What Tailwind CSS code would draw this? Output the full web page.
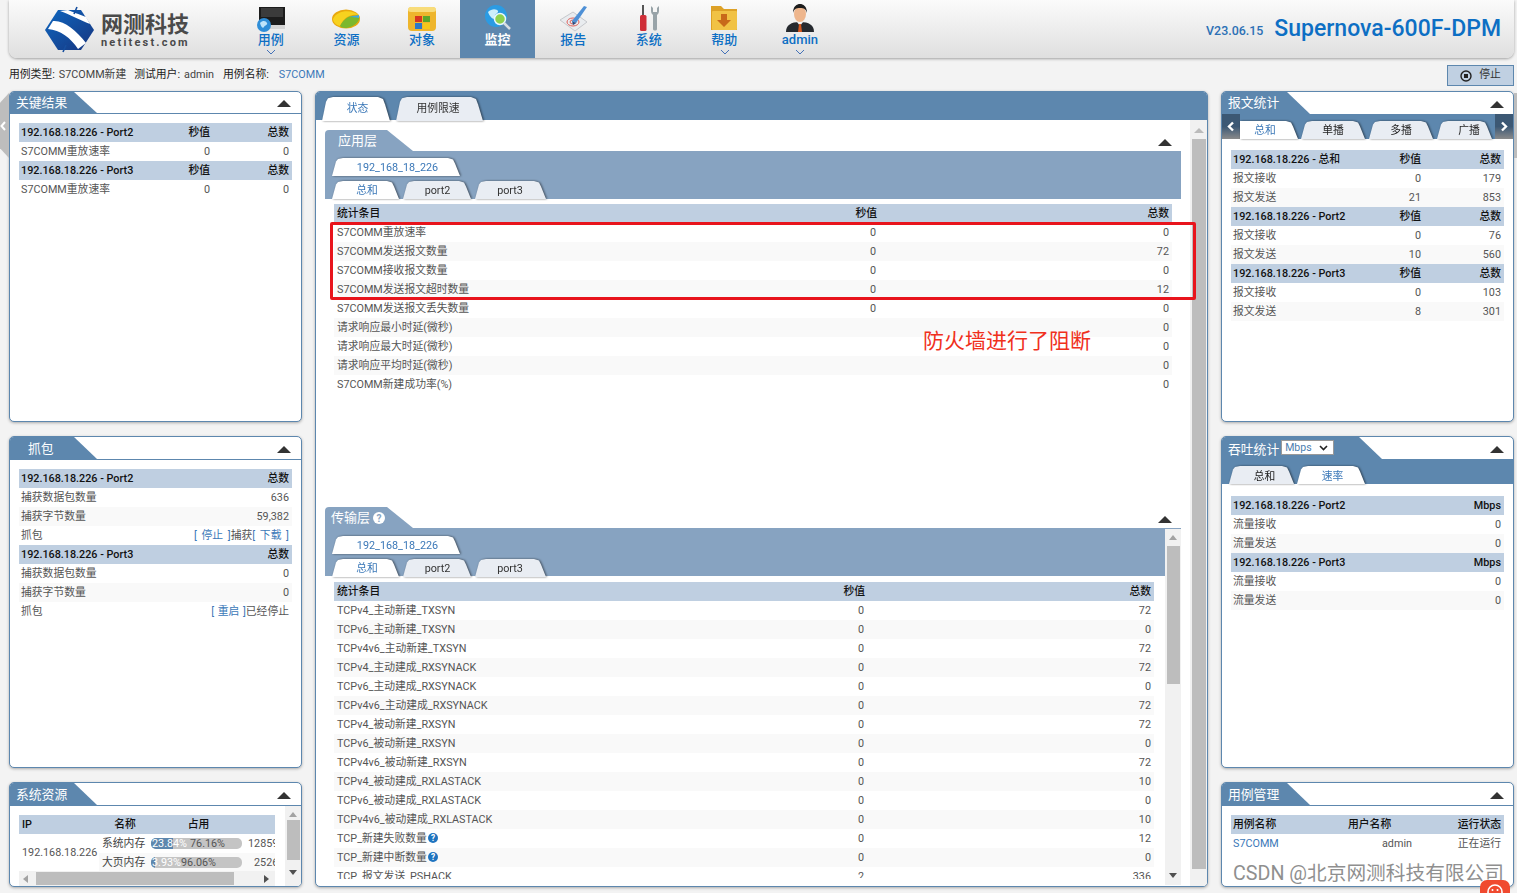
<!DOCTYPE html>
<html lang="zh-CN">
<head>
    <meta charset="UTF-8">
    <title>Supernova-600F-DPM</title>
    <script src="https://cdn.jsdelivr.net/npm/@tailwindcss/browser@4"></script>
</head>
<body class="bg-[#f3f3f3]">
<div class="relative w-[1517px] h-[893px] overflow-hidden pl-[9px] text-[10.8px] text-[#555] font-['Roboto','Noto_Sans_CJK_SC',sans-serif]">

    <!-- side handles -->
    <div class="absolute left-0 top-[93px] w-[9px] h-[65px] bg-[#bdbdbd] [clip-path:polygon(0_15%,100%_0,100%_100%,0_85%)]"></div>
    <svg class="absolute left-0 top-[121px]" width="7" height="10" viewBox="0 0 7 10"><path d="M5 1L1.5 5L5 9" fill="none" stroke="#fff" stroke-width="2"/></svg>
    <div class="absolute right-0 top-[93px] w-[3px] h-[65px] bg-[#bdbdbd]"></div>

    <!-- Header -->
    <header class="flex items-stretch w-[1505px] h-[58px] rounded-b-lg bg-gradient-to-b from-[#fbfbfb] to-[#dfdfdf] shadow-[0_1px_3px_rgba(0,0,0,.35)]">
        <div class="flex w-[224px] pl-[35px] pt-[6px]">
            <svg width="52" height="47" viewBox="0 0 52 47">
                <defs><linearGradient id="lg" x1="0" y1="0" x2="1" y2="1"><stop offset="0" stop-color="#0f67c0"/><stop offset="1" stop-color="#17357f"/></linearGradient></defs>
                <path d="M1 24L14 4H37L50 24L37 44H14Z" fill="url(#lg)"/>
                <path d="M9 15C20 14 32 24 42 37L34 43C27 32 16 24 4 23ZM16 5C25 8 36 14 46 18L42 11C35 8 28 6 24 4Z" fill="#fff"/>
                <path d="M33 1L30 8M19 46L22 39" stroke="#174f9f" stroke-width="1.6"/>
            </svg>
            <div class="ml-[5px] pt-[7px] text-[#4a4a4a]">
                <div class="text-[22px] leading-[24px] font-bold">网测科技</div>
                <div class="text-[11px] leading-[12px] font-bold tracking-[2.2px] whitespace-nowrap">netitest.com</div>
            </div>
        </div>
        <nav class="flex text-[#0d6fc4] text-[13px] font-medium leading-[16px] text-center">
            <a class="relative block w-[75.6px] pt-[6px]">
                <svg class="mx-auto" width="30" height="26" viewBox="0 0 30 26">
                    <rect x="3" y="1" width="26" height="18" fill="#1c1c1c"/><rect x="5" y="2" width="22" height="9" fill="#3b3b3b"/><rect x="6" y="19" width="23" height="4" fill="#d5d5d5"/>
                    <circle cx="8" cy="19" r="7" fill="#2f8ed8"/><path d="M4 17c3-3 6-2 7 0s-2 2-3 4-3 0-4-4z" fill="#bfe4fa"/>
                </svg>
                <span class="block">用例</span>
                <svg class="absolute left-[33px] top-[49px]" width="10" height="6" viewBox="0 0 10 6"><path d="M1 1L5 5L9 1" fill="none" stroke="#4472b8" stroke-width="1"/></svg>
            </a>
            <a class="block w-[75.6px] pt-[6px]">
                <svg class="mx-auto" width="30" height="26" viewBox="0 0 30 26">
                    <ellipse cx="15" cy="13" rx="14" ry="9.5" fill="#e9a90e"/><path d="M2 13C6 4 20 3 28 9C22 8 14 9 9 20C5 19 2 16 2 13Z" fill="#f7d21f"/><path d="M9 20C14 10 21 9 28 10C30 15 22 22 14 22C12 22 10 21 9 20Z" fill="#7cb82c"/><path d="M18 11L28 9L28 12C24 11 21 11 18 11Z" fill="#41a8e0"/>
                </svg>
                <span class="block">资源</span>
            </a>
            <a class="block w-[75.6px] pt-[6px]">
                <svg class="mx-auto" width="30" height="26" viewBox="0 0 30 26">
                    <rect x="1" y="1" width="28" height="24" rx="4" fill="#eeb52c"/><rect x="1" y="1" width="28" height="5" rx="3" fill="#f8dc7a"/>
                    <rect x="8" y="10" width="7" height="6" fill="#d8351f"/><rect x="16" y="10" width="7" height="6" fill="#5aa62a"/><rect x="8" y="17" width="7" height="6" fill="#2d78c6"/><rect x="16" y="17" width="7" height="6" fill="#f5c71a"/>
                </svg>
                <span class="block">对象</span>
            </a>
            <a class="block w-[75.6px] pt-[4px] bg-[#5d87ae] text-white font-bold">
                <svg class="mx-auto" width="30" height="28" viewBox="0 0 30 28">
                    <circle cx="13" cy="12" r="11" fill="#2b9be3"/><path d="M5 8c4-4 9-3 10-1s-4 3-3 6-4 3-7-5z" fill="#cdeefc"/><circle cx="17" cy="15" r="5.5" fill="#8ed14f" stroke="#e8f6ff" stroke-width="1.5"/><path d="M21 19L27 25" stroke="#d8dde2" stroke-width="2.5"/>
                </svg>
                <span class="block">监控</span>
            </a>
            <a class="block w-[75.6px] pt-[4px]">
                <svg class="mx-auto" width="30" height="28" viewBox="0 0 30 28">
                    <path d="M2 16L15 8L29 18L17 27Z" fill="#e9ecef" stroke="#c6c8cc"/><ellipse cx="15" cy="18" rx="6" ry="4" fill="none" stroke="#e0605a"/><ellipse cx="15" cy="18" rx="3" ry="2" fill="none" stroke="#e0605a"/>
                    <path d="M14 17L26 2L29 3L18 19Z" fill="#4e90d6"/><path d="M14 17L15 21L18 19Z" fill="#234f86"/>
                </svg>
                <span class="block">报告</span>
            </a>
            <a class="block w-[75.6px] pt-[4px]">
                <svg class="mx-auto" width="30" height="28" viewBox="0 0 30 28">
                    <rect x="8" y="1" width="2" height="10" fill="#555"/><rect x="6" y="11" width="6.5" height="16" rx="1.5" fill="#cf2e38"/>
                    <path d="M17 2v5c0 2 1 3 2 4v14c0 2 4 2 4 0V11c1-1 2-2 2-4V2l-2 2v4h-4V4z" fill="#98a3a8"/>
                </svg>
                <span class="block">系统</span>
            </a>
            <a class="relative block w-[75.6px] pt-[4px]">
                <svg class="mx-auto" width="30" height="28" viewBox="0 0 30 28">
                    <path d="M2 2h10l3 3h13v21H2z" fill="#dda127"/><rect x="3" y="7" width="25" height="19" rx="1" fill="#f1c245"/>
                    <path d="M12 10h6v6h4l-7 7-7-7h4z" fill="#c8691a"/>
                </svg>
                <span class="block">帮助</span>
                <svg class="absolute left-[33px] top-[49px]" width="10" height="6" viewBox="0 0 10 6"><path d="M1 1L5 5L9 1" fill="none" stroke="#4472b8" stroke-width="1"/></svg>
            </a>
            <a class="relative block w-[75.6px] pt-[4px]">
                <svg class="mx-auto" width="30" height="28" viewBox="0 0 30 28">
                    <path d="M1 28c0-7 5-10 14-10s14 3 14 10z" fill="#25292e"/><path d="M12 18h6l-3 4z" fill="#f2f2f2"/><path d="M14 20h2l1 8h-4z" fill="#d4581f"/>
                    <ellipse cx="15" cy="10" rx="6" ry="8" fill="#eeb68d"/><path d="M8 9C8 2 12 0 15 0s7 2 7 9c-1-4-3-5-7-5s-6 1-7 5z" fill="#1d1d1d"/>
                </svg>
                <span class="block">admin</span>
                <svg class="absolute left-[33px] top-[49px]" width="10" height="6" viewBox="0 0 10 6"><path d="M1 1L5 5L9 1" fill="none" stroke="#4472b8" stroke-width="1"/></svg>
            </a>
        </nav>
        <div class="ml-auto flex items-center pr-[13px] pb-[1px] text-[#0d6fc4] font-medium">
            <span class="text-[12.4px] text-[#2c70b5] mt-[6px] mr-[11px]">V23.06.15</span>
            <span class="text-[23px] leading-[30px]">Supernova-600F-DPM</span>
        </div>
    </header>

    <!-- Info row -->
    <div class="flex items-center w-[1505px] h-[33px] pt-[2px] text-[#444]">
        <span class="text-[#222]">用例类型:</span><span class="ml-[4px]">S7COMM新建</span>
        <span class="ml-[8px] text-[#222]">测试用户:</span><span class="ml-[4px]">admin</span>
        <span class="ml-[9px] text-[#222]">用例名称:</span><span class="ml-[10px] text-[#3b78b8]">S7COMM</span>
        <button class="ml-auto flex items-center justify-center gap-[7px] w-[67px] h-[21px] bg-[#c0d0e2] border border-[#5d87ae] text-[#333]">
            <svg width="12" height="12" viewBox="0 0 12 12"><circle cx="6" cy="6" r="5" fill="none" stroke="#222" stroke-width="1.4"/><rect x="4" y="4" width="4" height="4" fill="#222"/></svg>
            <span>停止</span>
        </button>
    </div>

    <!-- Columns -->
    <div class="flex gap-[13px] w-[1505px] h-[796px]">

        <!-- Left column -->
        <div class="flex flex-col gap-[14px] w-[293px]">
            <section class="h-[331px] bg-white border border-[#5d87ae] rounded-[5px] shadow-[0_1px_3px_rgba(0,0,0,.3)] overflow-hidden">
                <div class="flex justify-between h-[22px] border-b border-[#5d87ae]">
                    <div class="w-[87px] pl-[6px] bg-[#5d87ae] text-white text-[12.8px] leading-[22px] [clip-path:polygon(0_0,calc(100%_-_23px)_0,100%_100%,0_100%)]">关键结果</div>
                    <div class="w-0 h-0 mt-[8px] mr-[10px] border-x-[7px] border-x-transparent border-b-[7px] border-b-[#333]"></div>
                </div>
                <table class="ml-[9px] mt-[9px] w-[273px] table-fixed border-collapse [&_td]:h-[19px] [&_td]:p-0 [&_td]:pl-[2px] [&_td]:pr-[3px] [&_td]:pt-px">
                    <colgroup><col class="w-[132px]"><col class="w-[62px]"><col></colgroup>
                    <tr class="bg-[#bfcfe1] text-[#111] font-medium"><td>192.168.18.226 - Port2</td><td class="text-right">秒值</td><td class="text-right">总数</td></tr>
                    <tr><td>S7COMM重放速率</td><td class="text-right">0</td><td class="text-right">0</td></tr>
                    <tr class="bg-[#bfcfe1] text-[#111] font-medium"><td>192.168.18.226 - Port3</td><td class="text-right">秒值</td><td class="text-right">总数</td></tr>
                    <tr><td>S7COMM重放速率</td><td class="text-right">0</td><td class="text-right">0</td></tr>
                </table>
            </section>

            <section class="h-[332px] bg-white border border-[#5d87ae] rounded-[5px] shadow-[0_1px_3px_rgba(0,0,0,.3)] overflow-hidden">
                <div class="flex justify-between h-[23px] border-b border-[#5d87ae]">
                    <div class="w-[87px] pl-[18px] bg-[#5d87ae] text-white text-[12.8px] leading-[23px] [clip-path:polygon(0_0,calc(100%_-_23px)_0,100%_100%,0_100%)]">抓包</div>
                    <div class="w-0 h-0 mt-[9px] mr-[10px] border-x-[7px] border-x-transparent border-b-[7px] border-b-[#333]"></div>
                </div>
                <table class="ml-[9px] mt-[9px] w-[273px] table-fixed border-collapse [&_td]:h-[19px] [&_td]:p-0 [&_td]:pl-[2px] [&_td]:pr-[3px] [&_td]:pt-px">
                    <colgroup><col class="w-[150px]"><col></colgroup>
                    <tr class="bg-[#bfcfe1] text-[#111] font-medium"><td>192.168.18.226 - Port2</td><td class="text-right">总数</td></tr>
                    <tr><td>捕获数据包数量</td><td class="text-right">636</td></tr>
                    <tr class="bg-[#f9f9f9]"><td>捕获字节数量</td><td class="text-right">59,382</td></tr>
                    <tr><td>抓包</td><td class="text-right"><span class="text-[#3b78b8] [word-spacing:2px]">[ 停止 ]</span>捕获<span class="text-[#3b78b8] [word-spacing:2px]">[ 下载 ]</span></td></tr>
                    <tr class="bg-[#bfcfe1] text-[#111] font-medium"><td>192.168.18.226 - Port3</td><td class="text-right">总数</td></tr>
                    <tr><td>捕获数据包数量</td><td class="text-right">0</td></tr>
                    <tr class="bg-[#f9f9f9]"><td>捕获字节数量</td><td class="text-right">0</td></tr>
                    <tr><td>抓包</td><td class="text-right"><span class="text-[#3b78b8] [word-spacing:1px]">[ 重启 ]</span>已经停止</td></tr>
                </table>
            </section>

            <section class="h-[105px] bg-white border border-[#5d87ae] rounded-[5px] shadow-[0_1px_3px_rgba(0,0,0,.3)] overflow-hidden">
                <div class="flex justify-between h-[23px] border-b border-[#5d87ae]">
                    <div class="w-[87px] pl-[6px] bg-[#5d87ae] text-white text-[12.8px] leading-[23px] [clip-path:polygon(0_0,calc(100%_-_23px)_0,100%_100%,0_100%)]">系统资源</div>
                    <div class="w-0 h-0 mt-[9px] mr-[10px] border-x-[7px] border-x-transparent border-b-[7px] border-b-[#333]"></div>
                </div>
                <div class="flex h-[80px]">
                    <div class="w-[266px] pl-[9px] pt-[9px]">
                        <div class="w-[256px] h-[56px] overflow-hidden">
                            <table class="w-[290px] table-fixed border-collapse whitespace-nowrap [&_td]:h-[19px] [&_td]:p-0 [&_td]:px-[3px] [&_td]:pt-px">
                                <colgroup><col class="w-[80px]"><col class="w-[52px]"><col class="w-[95px]"><col></colgroup>
                                <tr class="bg-[#bfcfe1] text-[#111] font-medium"><td>IP</td><td class="text-center">名称</td><td class="text-center">占用</td><td></td></tr>
                                <tr><td rowspan="2">192.168.18.226</td><td class="text-[#444]">系统内存</td>
                                    <td class="p-0!"><div class="relative w-[91px] h-[11px] rounded-[5px] bg-[#c4c4c4] overflow-hidden leading-[11px]"><div class="h-full bg-[#5d87ae] w-[24%]"></div><span class="absolute left-[1px] top-0 text-white">23.84%</span><span class="absolute left-[39px] top-0 text-[#555]">76.16%</span></div></td>
                                    <td class="pl-[2px]!">12859</td></tr>
                                <tr class="bg-[#f9f9f9]"><td class="text-[#444]">大页内存</td>
                                    <td class="p-0!"><div class="relative w-[91px] h-[11px] rounded-[5px] bg-[#c4c4c4] overflow-hidden leading-[11px]"><div class="h-full bg-[#5d87ae] w-[4%]"></div><span class="absolute left-[1px] top-0 text-white">3.93%</span><span class="absolute left-[30px] top-0 text-[#555]">96.06%</span></div></td>
                                    <td class="pl-[8px]!">2526</td></tr>
                            </table>
                        </div>
                        <div class="flex items-center w-[256px] h-[15px] bg-[#f1f1f1]">
                            <div class="w-0 h-0 ml-[4px] border-y-[4px] border-y-transparent border-r-[5px] border-r-[#a3a3a3]"></div>
                            <div class="ml-[8px] w-[198px] h-[13px] bg-[#bdbdbd]"></div>
                            <div class="w-0 h-0 ml-[30px] border-y-[4px] border-y-transparent border-l-[5px] border-l-[#505050]"></div>
                        </div>
                    </div>
                    <div class="flex flex-col items-center w-[16px] ml-[9px] bg-[#f1f1f1] pt-[6px]">
                        <div class="w-0 h-0 border-x-[4px] border-x-transparent border-b-[5px] border-b-[#a3a3a3]"></div>
                        <div class="w-[13px] h-[40px] mt-[3px] bg-[#bdbdbd]"></div>
                        <div class="w-0 h-0 mt-[10px] border-x-[4px] border-x-transparent border-t-[5px] border-t-[#505050]"></div>
                    </div>
                </div>
            </section>
        </div>

        <!-- Center column -->
        <main class="relative w-[893px] h-[796px] bg-white border border-[#5d87ae] rounded-[5px] shadow-[0_1px_3px_rgba(0,0,0,.3)] overflow-hidden">
            <div class="h-[28px] pl-[6px] pt-[5px] bg-[#5d87ae]">
                <div class="flex gap-[3px] drop-shadow-[1px_0_1px_rgba(0,0,0,.55)] [&>a]:h-[24px] [&>a]:leading-[24px] [&>a]:text-center [&>a]:[clip-path:polygon(0_100%,2px_60%,4px_20%,6px_5%,11px_0,calc(100%_-_15px)_0,calc(100%_-_10px)_8%,calc(100%_-_8px)_30%,calc(100%_-_3px)_100%)]">
                    <a class="w-[71px] bg-white text-[#3b78b8]">状态</a>
                    <a class="w-[90px] pr-[6px] bg-[#e9edf3] text-[#333]">用例限速</a>
                </div>
            </div>
            <div class="flex h-[767px]">
                <div class="w-[866px] pl-[9px]">

                    <!-- Application layer -->
                    <div class="h-[387px] pt-[10px]">
                        <div class="flex justify-between h-[21px]">
                            <div class="w-[88px] pl-[13px] bg-[#87a3c1] text-white text-[13px] leading-[22px] rounded-tl-[4px] [clip-path:polygon(0_0,calc(100%_-_26px)_0,100%_100%,0_100%)]">应用层</div>
                            <div class="w-0 h-0 mt-[9px] mr-[9px] border-x-[7px] border-x-transparent border-b-[7px] border-b-[#333]"></div>
                        </div>
                        <div class="w-[856px] h-[48px] bg-[#87a3c1] pl-[7px] pt-[7px]">
                            <div class="flex drop-shadow-[1px_0_1px_rgba(0,0,0,.55)] [&>a]:h-[18px] [&>a]:leading-[19px] [&>a]:text-center [&>a]:[clip-path:polygon(0_100%,2px_60%,4px_20%,6px_5%,11px_0,calc(100%_-_15px)_0,calc(100%_-_10px)_8%,calc(100%_-_8px)_30%,calc(100%_-_3px)_100%)]">
                                <a class="w-[131px] bg-white text-[#3b78b8]">192_168_18_226</a>
                            </div>
                            <div class="flex mt-[5px] drop-shadow-[1px_0_1px_rgba(0,0,0,.55)] [&>a]:h-[18px] [&>a]:leading-[20px] [&>a]:text-center [&>a]:[clip-path:polygon(0_100%,2px_60%,4px_20%,6px_5%,11px_0,calc(100%_-_15px)_0,calc(100%_-_10px)_8%,calc(100%_-_8px)_30%,calc(100%_-_3px)_100%)]">
                                <a class="w-[70px] bg-white text-[#3b78b8]">总和</a>
                                <a class="w-[71px] ml-[1px] pr-[2px] bg-[#e9edf3] text-[#333]">port2</a>
                                <a class="w-[74px] ml-[1px] pr-[4px] bg-[#e9edf3] text-[#333]">port3</a>
                            </div>
                        </div>
                        <table class="ml-[9px] mt-[5px] w-[838px] table-fixed border-collapse [&_td]:h-[19px] [&_td]:p-0 [&_td]:px-[3px] [&_td]:pt-px [&_tr:nth-child(odd)]:bg-[#f9f9f9]">
                            <colgroup><col class="w-[545px]"><col class="w-[0px]"><col></colgroup>
                            <tr class="bg-[#bfcfe1]! text-[#111] font-medium"><td>统计条目</td><td class="text-right"></td><td class="text-right">总数</td></tr>
                            <tr class="bg-white!"><td>S7COMM重放速率</td><td></td><td class="text-right">0</td></tr>
                            <tr><td>S7COMM发送报文数量</td><td></td><td class="text-right">72</td></tr>
                            <tr class="bg-white!"><td>S7COMM接收报文数量</td><td></td><td class="text-right">0</td></tr>
                            <tr><td>S7COMM发送报文超时数量</td><td></td><td class="text-right">12</td></tr>
                            <tr class="bg-white!"><td>S7COMM发送报文丢失数量</td><td></td><td class="text-right">0</td></tr>
                            <tr><td>请求响应最小时延(微秒)</td><td></td><td class="text-right">0</td></tr>
                            <tr class="bg-white!"><td>请求响应最大时延(微秒)</td><td></td><td class="text-right">0</td></tr>
                            <tr><td>请求响应平均时延(微秒)</td><td></td><td class="text-right">0</td></tr>
                            <tr class="bg-white!"><td>S7COMM新建成功率(%)</td><td></td><td class="text-right">0</td></tr>
                        </table>
                    </div>

                    <!-- Transport layer -->
                    <div class="flex justify-between h-[22px] border-b border-[#87a3c1]">
                        <div class="w-[88px] pl-[6px] bg-[#87a3c1] text-white text-[13px] leading-[22px] rounded-tl-[4px] [clip-path:polygon(0_0,calc(100%_-_26px)_0,100%_100%,0_100%)] flex items-start gap-[3px]">传输层<svg class="mt-[5px]" width="12" height="12" viewBox="0 0 12 12"><circle cx="6" cy="6" r="6" fill="#fff"/><text x="6" y="9.5" text-anchor="middle" font-size="10" font-weight="700" fill="#87a3c1">?</text></svg></div>
                        <div class="w-0 h-0 mt-[9px] mr-[9px] border-x-[7px] border-x-transparent border-b-[7px] border-b-[#333]"></div>
                    </div>
                    <div class="flex h-[358px]">
                        <div class="w-[840px] h-[350px] overflow-hidden">
                            <div class="h-[47px] bg-[#87a3c1] pl-[7px] pt-[7px]">
                                <div class="flex drop-shadow-[1px_0_1px_rgba(0,0,0,.55)] [&>a]:h-[18px] [&>a]:leading-[19px] [&>a]:text-center [&>a]:[clip-path:polygon(0_100%,2px_60%,4px_20%,6px_5%,11px_0,calc(100%_-_15px)_0,calc(100%_-_10px)_8%,calc(100%_-_8px)_30%,calc(100%_-_3px)_100%)]">
                                    <a class="w-[131px] bg-white text-[#3b78b8]">192_168_18_226</a>
                                </div>
                                <div class="flex mt-[5px] drop-shadow-[1px_0_1px_rgba(0,0,0,.55)] [&>a]:h-[18px] [&>a]:leading-[19px] [&>a]:text-center [&>a]:[clip-path:polygon(0_100%,2px_60%,4px_20%,6px_5%,11px_0,calc(100%_-_15px)_0,calc(100%_-_10px)_8%,calc(100%_-_8px)_30%,calc(100%_-_3px)_100%)]">
                                    <a class="w-[70px] bg-white text-[#3b78b8]">总和</a>
                                    <a class="w-[71px] ml-[1px] pr-[2px] bg-[#e9edf3] text-[#333]">port2</a>
                                    <a class="w-[74px] ml-[1px] pr-[4px] bg-[#e9edf3] text-[#333]">port3</a>
                                </div>
                            </div>
                            <table class="ml-[9px] mt-[6px] w-[820px] table-fixed border-collapse [&_td]:h-[19px] [&_td]:p-0 [&_td]:px-[3px] [&_td]:pt-px [&_tr:nth-child(odd)]:bg-[#f9f9f9]">
                                <colgroup><col class="w-[533px]"><col class="w-[0px]"><col></colgroup>
                                <tr class="bg-[#bfcfe1]! text-[#111] font-medium"><td>统计条目</td><td></td><td class="text-right">总数</td></tr>
                                <tr class="bg-white!"><td>TCPv4_主动新建_TXSYN</td><td></td><td class="text-right">72</td></tr>
                                <tr><td>TCPv6_主动新建_TXSYN</td><td></td><td class="text-right">0</td></tr>
                                <tr class="bg-white!"><td>TCPv4v6_主动新建_TXSYN</td><td></td><td class="text-right">72</td></tr>
                                <tr><td>TCPv4_主动建成_RXSYNACK</td><td></td><td class="text-right">72</td></tr>
                                <tr class="bg-white!"><td>TCPv6_主动建成_RXSYNACK</td><td></td><td class="text-right">0</td></tr>
                                <tr><td>TCPv4v6_主动建成_RXSYNACK</td><td></td><td class="text-right">72</td></tr>
                                <tr class="bg-white!"><td>TCPv4_被动新建_RXSYN</td><td></td><td class="text-right">72</td></tr>
                                <tr><td>TCPv6_被动新建_RXSYN</td><td></td><td class="text-right">0</td></tr>
                                <tr class="bg-white!"><td>TCPv4v6_被动新建_RXSYN</td><td></td><td class="text-right">72</td></tr>
                                <tr><td>TCPv4_被动建成_RXLASTACK</td><td></td><td class="text-right">10</td></tr>
                                <tr class="bg-white!"><td>TCPv6_被动建成_RXLASTACK</td><td></td><td class="text-right">0</td></tr>
                                <tr><td>TCPv4v6_被动建成_RXLASTACK</td><td></td><td class="text-right">10</td></tr>
                                <tr class="bg-white!"><td>TCP_新建失败数量<svg class="inline ml-[1px] mb-[2px]" width="10" height="10" viewBox="0 0 12 12"><circle cx="6" cy="6" r="6" fill="#1f74c0"/><text x="6" y="9.5" text-anchor="middle" font-size="10" font-weight="700" fill="#fff">?</text></svg></td><td></td><td class="text-right">12</td></tr>
                                <tr><td>TCP_新建中断数量<svg class="inline ml-[1px] mb-[2px]" width="10" height="10" viewBox="0 0 12 12"><circle cx="6" cy="6" r="6" fill="#1f74c0"/><text x="6" y="9.5" text-anchor="middle" font-size="10" font-weight="700" fill="#fff">?</text></svg></td><td></td><td class="text-right">0</td></tr>
                                <tr class="bg-white!"><td>TCP_报文发送_PSHACK</td><td></td><td class="text-right">336</td></tr>
                            </table>
                        </div>
                        <div class="flex flex-col items-center w-[16px] h-[356px] bg-[#f1f1f1] pt-[6px]">
                            <div class="w-0 h-0 border-x-[4px] border-x-transparent border-b-[5px] border-b-[#a3a3a3]"></div>
                            <div class="w-[13px] h-[138px] mt-[6px] bg-[#bdbdbd]"></div>
                            <div class="w-[13px] h-[186px] mt-[0px] bg-[#f1f1f1]"></div>
                            <div class="w-0 h-0 mt-[3px] border-x-[4px] border-x-transparent border-t-[5px] border-t-[#505050]"></div>
                        </div>
                    </div>
                </div>
                <div class="flex flex-col items-center w-[17px] ml-[9px] bg-[#f1f1f1] pt-[8px]">
                    <div class="w-0 h-0 border-x-[5px] border-x-transparent border-b-[5px] border-b-[#bbb]"></div>
                    <div class="w-[14px] h-[730px] mt-[6px] bg-[#bdbdbd]"></div>
                </div>
            </div>

            <!-- value column -->
            <span class="absolute left-[537px] top-[112px] w-[24px] text-right text-[#111] font-medium leading-[19px]">秒值</span>
            <div class="absolute left-[537px] top-[131px] w-[23px] text-right leading-[19px]">0<br>0<br>0<br>0<br>0</div>
            <span class="absolute left-[525px] top-[490px] w-[24px] text-right text-[#111] font-medium leading-[19px]">秒值</span>
            <div class="absolute left-[525px] top-[509px] h-[277px] overflow-hidden w-[23px] text-right leading-[19px]">0<br>0<br>0<br>0<br>0<br>0<br>0<br>0<br>0<br>0<br>0<br>0<br>0<br>0<br>2</div>

            <!-- Annotation over the table -->
            <div class="absolute left-[14px] top-[130px] w-[866px] h-[78px] border-[3px] border-[#e8141c] rounded-[2px]"></div>
            <div class="absolute left-[607px] top-[232px] text-[21px] leading-[30px] text-[#f0301c] font-['Noto_Sans_CJK_SC',sans-serif]">防火墙进行了阻断</div>
        </main>

        <!-- Right column -->
        <div class="flex flex-col gap-[14px] w-[293px]">
            <section class="h-[331px] bg-white border border-[#5d87ae] rounded-[5px] shadow-[0_1px_3px_rgba(0,0,0,.3)] overflow-hidden">
                <div class="flex justify-between h-[22px]">
                    <div class="w-[88px] pl-[6px] bg-[#5d87ae] text-white text-[12.8px] leading-[22px] [clip-path:polygon(0_0,calc(100%_-_23px)_0,100%_100%,0_100%)]">报文统计</div>
                    <div class="w-0 h-0 mt-[9px] mr-[9px] border-x-[7px] border-x-transparent border-b-[7px] border-b-[#333]"></div>
                </div>
                <div class="relative flex h-[25px] bg-[#5d87ae] pt-[7px] pl-[18px]">
                    <div class="absolute left-0 top-0 flex items-center justify-center w-[18px] h-[25px] bg-gradient-to-b from-[#3c5874] via-[#3c5874] to-[#8a8a8a]"><svg width="8" height="11" viewBox="0 0 8 11"><path d="M6 1.5L2 5.5L6 9.5" fill="none" stroke="#fff" stroke-width="2.4"/></svg></div>
                    <div class="absolute right-0 top-0 flex items-center justify-center w-[18px] h-[25px] bg-gradient-to-b from-[#3c5874] via-[#3c5874] to-[#8a8a8a]"><svg width="8" height="11" viewBox="0 0 8 11"><path d="M2 1.5L6 5.5L2 9.5" fill="none" stroke="#fff" stroke-width="2.4"/></svg></div>
                    <div class="flex drop-shadow-[1px_0_1px_rgba(0,0,0,.55)] [&>a]:h-[18px] [&>a]:leading-[20px] [&>a]:text-center [&>a]:[clip-path:polygon(0_100%,2px_60%,4px_20%,6px_5%,11px_0,calc(100%_-_15px)_0,calc(100%_-_10px)_8%,calc(100%_-_8px)_30%,calc(100%_-_3px)_100%)]">
                        <a class="w-[61px] pr-[11px] bg-white text-[#3b78b8] [clip-path:polygon(0_0,calc(100%_-_15px)_0,calc(100%_-_10px)_8%,calc(100%_-_8px)_30%,calc(100%_-_3px)_100%,0_100%)]!">总和</a>
                        <a class="w-[67px] pr-[3px] bg-[#e9edf3] text-[#222]">单播</a>
                        <a class="w-[67px] ml-[1px] pr-[3px] bg-[#e9edf3] text-[#222]">多播</a>
                        <a class="w-[58px] ml-[1px] pl-[6px] bg-[#e9edf3] text-[#222]">广播</a>
                    </div>
                </div>
                <table class="ml-[9px] mt-[11px] w-[273px] table-fixed border-collapse [&_td]:h-[19px] [&_td]:p-0 [&_td]:pl-[2px] [&_td]:pr-[3px] [&_td]:pt-px">
                    <colgroup><col class="w-[140px]"><col class="w-[53px]"><col></colgroup>
                    <tr class="bg-[#bfcfe1] text-[#111] font-medium"><td>192.168.18.226 - 总和</td><td class="text-right">秒值</td><td class="text-right">总数</td></tr>
                    <tr><td>报文接收</td><td class="text-right">0</td><td class="text-right">179</td></tr>
                    <tr class="bg-[#f9f9f9]"><td>报文发送</td><td class="text-right">21</td><td class="text-right">853</td></tr>
                    <tr class="bg-[#bfcfe1] text-[#111] font-medium"><td>192.168.18.226 - Port2</td><td class="text-right">秒值</td><td class="text-right">总数</td></tr>
                    <tr><td>报文接收</td><td class="text-right">0</td><td class="text-right">76</td></tr>
                    <tr class="bg-[#f9f9f9]"><td>报文发送</td><td class="text-right">10</td><td class="text-right">560</td></tr>
                    <tr class="bg-[#bfcfe1] text-[#111] font-medium"><td>192.168.18.226 - Port3</td><td class="text-right">秒值</td><td class="text-right">总数</td></tr>
                    <tr><td>报文接收</td><td class="text-right">0</td><td class="text-right">103</td></tr>
                    <tr class="bg-[#f9f9f9]"><td>报文发送</td><td class="text-right">8</td><td class="text-right">301</td></tr>
                </table>
            </section>

            <section class="h-[332px] bg-white border border-[#5d87ae] rounded-[5px] shadow-[0_1px_3px_rgba(0,0,0,.3)] overflow-hidden">
                <div class="flex justify-between h-[22px]">
                    <div class="flex items-start w-[160px] pl-[6px] bg-[#5d87ae] text-white text-[12.8px] leading-[26px] [clip-path:polygon(0_0,calc(100%_-_23px)_0,100%_100%,0_100%)]">吞吐统计
                        <div class="flex items-center justify-between ml-[2px] mt-[3px] w-[53px] h-[15px] pl-[3px] pr-[5px] bg-white border border-[#999] text-[#4a7db0] text-[10.5px] leading-[13px]">Mbps<svg width="9" height="6" viewBox="0 0 9 6"><path d="M1 1L4.5 4.5L8 1" fill="none" stroke="#222" stroke-width="1.6"/></svg></div>
                    </div>
                    <div class="w-0 h-0 mt-[9px] mr-[9px] border-x-[7px] border-x-transparent border-b-[7px] border-b-[#333]"></div>
                </div>
                <div class="h-[25px] bg-[#5d87ae] pt-[7px] pl-[7px]">
                    <div class="flex drop-shadow-[1px_0_1px_rgba(0,0,0,.55)] [&>a]:h-[18px] [&>a]:leading-[21px] [&>a]:text-center [&>a]:[clip-path:polygon(0_100%,2px_60%,4px_20%,6px_5%,11px_0,calc(100%_-_15px)_0,calc(100%_-_10px)_8%,calc(100%_-_8px)_30%,calc(100%_-_3px)_100%)]">
                        <a class="w-[68px] pl-[3px] bg-[#e9edf3] text-[#222]">总和</a>
                        <a class="w-[71px] bg-white text-[#3b78b8]">速率</a>
                    </div>
                </div>
                <table class="ml-[9px] mt-[12px] w-[273px] table-fixed border-collapse [&_td]:h-[19px] [&_td]:p-0 [&_td]:pl-[2px] [&_td]:pr-[3px] [&_td]:pt-px">
                    <colgroup><col class="w-[200px]"><col></colgroup>
                    <tr class="bg-[#bfcfe1] text-[#111] font-medium"><td>192.168.18.226 - Port2</td><td class="text-right">Mbps</td></tr>
                    <tr><td>流量接收</td><td class="text-right">0</td></tr>
                    <tr class="bg-[#f9f9f9]"><td>流量发送</td><td class="text-right">0</td></tr>
                    <tr class="bg-[#bfcfe1] text-[#111] font-medium"><td>192.168.18.226 - Port3</td><td class="text-right">Mbps</td></tr>
                    <tr><td>流量接收</td><td class="text-right">0</td></tr>
                    <tr class="bg-[#f9f9f9]"><td>流量发送</td><td class="text-right">0</td></tr>
                </table>
            </section>

            <section class="h-[105px] bg-white border border-[#5d87ae] rounded-[5px] shadow-[0_1px_3px_rgba(0,0,0,.3)] overflow-hidden">
                <div class="flex justify-between h-[23px] border-b border-[#5d87ae]">
                    <div class="w-[88px] pl-[6px] bg-[#5d87ae] text-white text-[12.8px] leading-[23px] [clip-path:polygon(0_0,calc(100%_-_23px)_0,100%_100%,0_100%)]">用例管理</div>
                    <div class="w-0 h-0 mt-[9px] mr-[9px] border-x-[7px] border-x-transparent border-b-[7px] border-b-[#333]"></div>
                </div>
                <table class="ml-[9px] mt-[9px] w-[273px] table-fixed border-collapse [&_td]:h-[19px] [&_td]:p-0 [&_td]:pl-[2px] [&_td]:pr-[3px] [&_td]:pt-px">
                    <colgroup><col class="w-[115px]"><col class="w-[69px]"><col></colgroup>
                    <tr class="bg-[#bfcfe1] text-[#111] font-medium"><td>用例名称</td><td>用户名称</td><td class="text-right">运行状态</td></tr>
                    <tr><td class="text-[#3b78b8]">S7COMM</td><td class="text-right">admin</td><td class="text-right">正在运行</td></tr>
                </table>
            </section>
        </div>
    </div>

    <!-- CSDN overlay -->
    <div class="absolute left-[1233px] top-[861px] text-[19.7px] leading-[26px] text-[#8f8f8f] whitespace-nowrap">CSDN @北京网测科技有限公司</div>
    <div class="absolute left-[1480px] top-[880px] flex justify-center w-[30px] h-[20px] pt-[4px] rounded-t-[7px] bg-[#f04a2f]">
        <svg width="16" height="16" viewBox="0 0 16 16"><circle cx="8" cy="8" r="7" fill="none" stroke="#fff" stroke-width="1.6"/><circle cx="5.5" cy="6" r="1" fill="#fff"/><circle cx="10.5" cy="6" r="1" fill="#fff"/></svg>
    </div>
</div>
</body>
</html>
